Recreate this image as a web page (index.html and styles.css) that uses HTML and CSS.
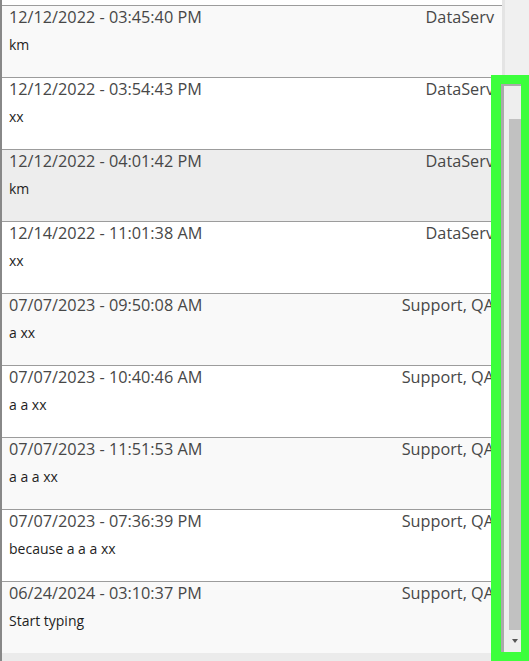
FILE: index.html
```html
<!DOCTYPE html>
<html>
<head>
<meta charset="utf-8">
<link rel="stylesheet" href="styles.css">
</head>
<body>
<div class="frame">
  <div class="list">
    <div class="row-partial"></div>
    <div class="row alt"><div class="head"><span class="date">12/12/2022 - 03:45:40 PM</span><span class="who">DataServ</span></div><div class="msg">km</div></div>
    <div class="row"><div class="head"><span class="date">12/12/2022 - 03:54:43 PM</span><span class="who">DataServ</span></div><div class="msg">xx</div></div>
    <div class="row hover"><div class="head"><span class="date">12/12/2022 - 04:01:42 PM</span><span class="who">DataServ</span></div><div class="msg">km</div></div>
    <div class="row"><div class="head"><span class="date">12/14/2022 - 11:01:38 AM</span><span class="who">DataServ</span></div><div class="msg">xx</div></div>
    <div class="row alt"><div class="head"><span class="date">07/07/2023 - 09:50:08 AM</span><span class="who">Support, QA</span></div><div class="msg">a xx</div></div>
    <div class="row"><div class="head"><span class="date">07/07/2023 - 10:40:46 AM</span><span class="who">Support, QA</span></div><div class="msg">a a xx</div></div>
    <div class="row alt"><div class="head"><span class="date">07/07/2023 - 11:51:53 AM</span><span class="who">Support, QA</span></div><div class="msg">a a a xx</div></div>
    <div class="row"><div class="head"><span class="date">07/07/2023 - 07:36:39 PM</span><span class="who">Support, QA</span></div><div class="msg">because a a a xx</div></div>
    <div class="row alt"><div class="head"><span class="date">06/24/2024 - 03:10:37 PM</span><span class="who">Support, QA</span></div><div class="msg">Start typing</div></div>
  </div>
  <div class="side">
    <div class="side-top"></div>
    <div class="scrollbar">
      <div class="sb-up"></div>
      <div class="sb-thumb"></div>
      <div class="sb-down"><span class="arrow"></span></div>
    </div>
  </div>
  <div class="highlight"></div>
</div>
</body>
</html>
```

FILE: styles.css
```css
html, body {
  margin: 0;
  padding: 0;
}
body {
  width: 529px;
  height: 661px;
  overflow: hidden;
  background: #ebebeb;
  font-family: "Open Sans", "Noto Sans", sans-serif;
}
.frame {
  position: relative;
  display: flex;
  width: 529px;
  height: 661px;
}
.list {
  width: 500px;
  flex: none;
  border-left: 2px solid #888;
  background: #ebebeb;
  display: flex;
  flex-direction: column;
}
.row-partial {
  height: 5px;
  background: #fff;
}
.row {
  height: 71px;
  border-top: 1px solid #9c9c9c;
  background: #fff;
  padding: 0 8px 0 7px;
  box-sizing: content-box;
  overflow: hidden;
}
.row.alt { background: #f9f9f9; }
.row.hover { background: #ededed; }
.head {
  display: flex;
  justify-content: space-between;
  font-size: 16.25px;
  line-height: 23px;
  color: #474747;
  white-space: nowrap;
}
.who {
  text-align: right;
}
.msg {
  margin-top: 6px;
  font-size: 14px;
  line-height: 20px;
  color: #1e1e1e;
}
.side {
  flex: 1;
  display: flex;
  flex-direction: column;
  background: #f0f0f0;
  border-left: 3px solid #e4e4e4;
}
.side-top {
  height: 84px;
  flex: none;
}
.scrollbar {
  margin-left: -4px;
  width: 20px;
  height: 568px;
  flex: none;
  box-sizing: border-box;
  border-left: 3px solid #aaa;
  border-top: 2px solid #aaa;
  background: #eeeeee;
  display: flex;
  flex-direction: column;
  align-items: flex-end;
}
.sb-up {
  height: 33px;
  flex: none;
}
.sb-thumb {
  width: 12px;
  height: 511px;
  background: #c1c1c1;
  flex: none;
}
.sb-down {
  flex: 1;
  width: 12px;
  display: flex;
  justify-content: center;
  padding-top: 9px;
  box-sizing: border-box;
}
.arrow {
  width: 0;
  height: 0;
  border-left: 3px solid transparent;
  border-right: 3px solid transparent;
  border-top: 4px solid #555;
}
.highlight {
  position: absolute;
  left: 491px;
  top: 75px;
  width: 38px;
  height: 586px;
  box-sizing: border-box;
  border-style: solid;
  border-color: #3cff3c;
  border-width: 9px 8px 9px 10px;
}
```
